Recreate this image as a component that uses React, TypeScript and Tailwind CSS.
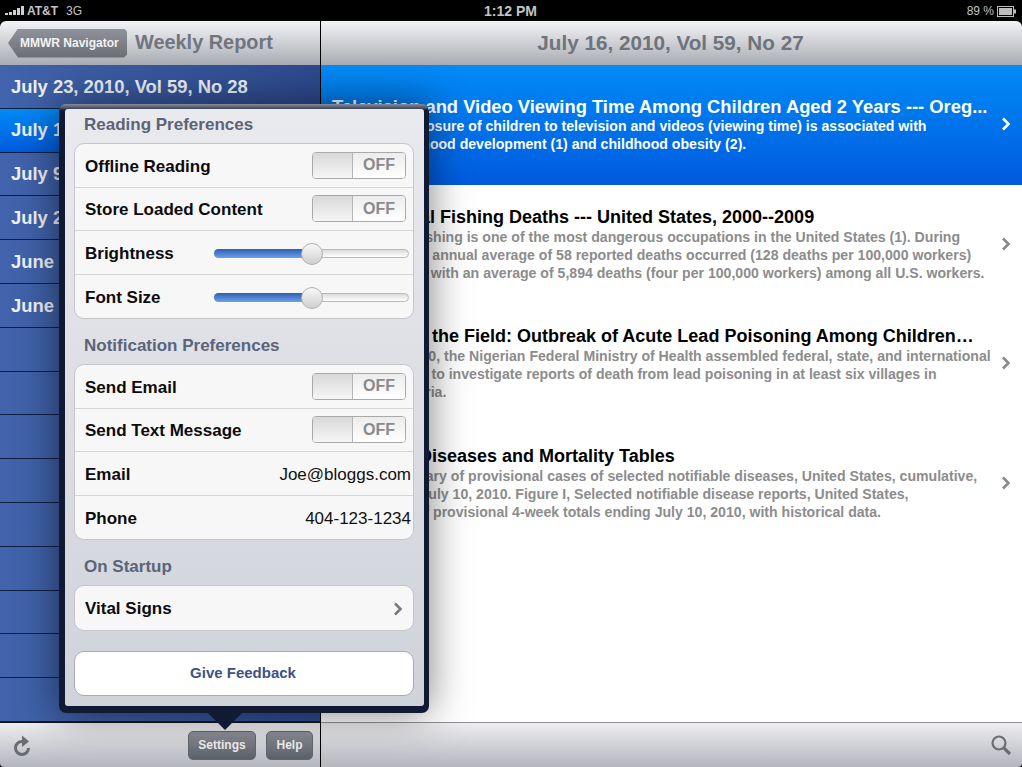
import React from "react";

const F = '"Liberation Sans", Arial, sans-serif';

function Toggle() {
  return (
    <div className="flex h-[27px] w-[94px] mr-[5px] -mt-[2px] rounded-[4px] border border-[#a9a9a9] bg-white overflow-hidden">
      <div className="w-[40px] h-full border-r border-[#b5b5b5] bg-gradient-to-b from-[#d8d8d8] to-[#f6f6f6]" />
      <div className="flex-1 flex items-center justify-center text-[16px] font-bold text-[#8a8a8a] bg-gradient-to-b from-[#ececec] to-white">OFF</div>
    </div>
  );
}

function Slider() {
  return (
    <div className="relative w-[195px] h-[9px] mr-[2px] rounded-full border border-[#b8b8b8] bg-gradient-to-b from-[#dcdcdc] to-white">
      <div className="w-[98px] -mt-px -ml-px h-[9px] rounded-l-full bg-gradient-to-b from-[#2b5fb4] to-[#6fa0e8]" />
      <div className="absolute left-[86px] top-[-7px] w-[22px] h-[22px] rounded-full border border-[#b0b0b0] bg-gradient-to-b from-[#f8f8f8] to-[#cfcfcf]" />
    </div>
  );
}

function Row({ label, children, last }: { label: string; children?: React.ReactNode; last?: boolean }) {
  return (
    <div className={`h-[43.5px] pt-[2px] flex items-center justify-between pl-[10px] pr-[2px] ${last ? "" : "border-b border-[#d6d6d6]"}`}>
      <span className="text-[17px] font-bold text-[#0c0c0c]">{label}</span>
      {children}
    </div>
  );
}

function Group({ children }: { children: React.ReactNode }) {
  return <div className="rounded-[10px] border border-[#c4c6ca] bg-[#f7f7f7] overflow-hidden">{children}</div>;
}

function Header({ children }: { children: React.ReactNode }) {
  return <div className="h-[34px] pl-[10px] pb-[2px] flex items-center text-[17px] font-bold text-[#5b6478]">{children}</div>;
}

function Chevron({ color, className }: { color: string; className?: string }) {
  return (
    <svg width="10" height="14" viewBox="0 0 10 14" className={className}>
      <path d="M2 1.5 L7.5 7 L2 12.5" fill="none" stroke={color} strokeWidth="2.6" />
    </svg>
  );
}

function Article({ title, lines, selected }: { title: string; lines: string[]; selected?: boolean }) {
  return (
    <div className={`relative h-[119.6px] pl-[11px] pr-[30px] flex items-center ${selected ? "bg-gradient-to-b from-[#058bf6] to-[#005ade]" : "bg-white"}`}>
      <div className="w-full whitespace-nowrap overflow-hidden">
        <div className={`leading-[21px] font-bold ${selected ? "text-[18.35px] text-white" : "text-[18px] text-black"}`}>{title}</div>
        {lines.map((l) => (
          <div key={l} className={`text-[14.1px] leading-[18px] font-bold ${selected ? "text-white" : "text-[#8c8c8c]"}`}>{l}</div>
        ))}
      </div>
      <Chevron color={selected ? "#ffffff" : "#8a8a8a"} className="absolute right-[11px] top-[52px]" />
    </div>
  );
}

function Btn({ children, w }: { children: React.ReactNode; w: string }) {
  return (
    <div className={`${w} h-[29px] rounded-[5px] border border-[#63666c] bg-gradient-to-b from-[#8c8f96] to-[#5c6068] text-[#eeeeee] text-[12px] font-bold flex items-center justify-center`}>
      {children}
    </div>
  );
}

const dates = [
  "July 23, 2010, Vol 59, No 28",
  "July 16, 2010, Vol 59, No 27",
  "July 9, 2010, Vol 59, No 26",
  "July 2, 2010, Vol 59, No 25",
  "June 25, 2010, Vol 59, No 24",
  "June 18, 2010, Vol 59, No 23",
];

export default function App() {
  return (
    <div className="relative w-[1022px] h-[767px] overflow-hidden bg-black flex flex-col" style={{ fontFamily: F }}>
      <div className="h-[21px] shrink-0 relative flex items-center justify-between px-[5px] pt-[1px] text-[12px] font-bold text-[#c4c4c4]">
        <div className="flex items-center gap-[2px]">
          <svg width="20" height="10" viewBox="0 0 20 10">
            <rect x="0" y="7" width="3" height="2" fill="#d0d0d0" />
            <rect x="4" y="6" width="3" height="3" fill="#d0d0d0" />
            <rect x="8" y="4" width="3" height="5" fill="#d0d0d0" />
            <rect x="12" y="2" width="3" height="7" fill="#d0d0d0" />
            <rect x="16" y="0" width="3" height="9" fill="#d0d0d0" />
          </svg>
          <span>AT&amp;T</span>
          <span className="ml-[6px] font-normal">3G</span>
        </div>
        <span className="absolute left-[484px] text-[14px] font-bold">1:12 PM</span>
        <div className="flex items-center gap-[3px]">
          <span className="font-normal">89 %</span>
          <svg width="20" height="11" viewBox="0 0 20 11">
            <rect x="0.5" y="0.5" width="16" height="10" fill="none" stroke="#bdbdbd" />
            <rect x="2" y="2" width="13" height="7" fill="#bdbdbd" />
            <rect x="17" y="3.5" width="2" height="4" fill="#bdbdbd" />
          </svg>
        </div>
      </div>

      <div className="flex-1 flex min-h-0">
        <div className="w-[320px] shrink-0 flex flex-col">
          <div className="h-[44px] shrink-0 rounded-tl-[6px] bg-gradient-to-b from-[#f3f4f6] to-[#a9acb3] flex items-center pl-[8px] gap-[8px]">
            <div className="h-[29px] w-[119px] bg-gradient-to-b from-[#8f929a] to-[#6b6e76] text-[#f2f2f2] text-[12px] font-bold flex items-center pl-[12px] [clip-path:polygon(10px_0,calc(100%-3px)_0,100%_3px,100%_calc(100%-3px),calc(100%-3px)_100%,10px_100%,0_50%)]">
              MMWR Navigator
            </div>
            <span className="text-[19.9px] font-bold text-[#71757e]">Weekly Report</span>
          </div>
          <div className="flex-1 min-h-0 overflow-hidden flex flex-col bg-gradient-to-r from-[#4264ac] to-[#2c4a8e]">
            {dates.map((d, i) => (
              <div
                key={d}
                className={`h-[43.8px] shrink-0 pl-[11px] flex items-center border-b border-[#0f1f44] text-[18.4px] font-bold text-[#eef1f7] ${i === 1 ? "bg-gradient-to-b from-[#058bf6] to-[#005ade]" : ""}`}
              >
                {d}
              </div>
            ))}
            {Array.from({ length: 9 }).map((_, i) => (
              <div key={i} className="h-[43.8px] shrink-0 border-b border-[#0f1f44]" />
            ))}
          </div>
          <div className="h-[45px] shrink-0 rounded-bl-[4px] bg-gradient-to-b from-[#eeeef0] to-[#b4b6bd] border-t border-[#10131c] flex items-center pl-[13px]">
            <svg width="20" height="21" viewBox="0 0 20 21">
              <path d="M15.5 13 A6.5 6.5 0 1 1 9 6.5" fill="none" stroke="#696c72" strokeWidth="3" />
              <path d="M9 0.5 L16 6.5 L9 12 Z" fill="#696c72" />
            </svg>
            <div className="ml-[155px]"><Btn w="w-[68px]">Settings</Btn></div>
            <div className="ml-[10px]"><Btn w="w-[47px]">Help</Btn></div>
          </div>
        </div>
        <div className="w-px bg-black shrink-0" />
        <div className="flex-1 flex flex-col min-w-0">
          <div className="h-[44px] shrink-0 rounded-tr-[6px] bg-gradient-to-b from-[#f3f4f6] to-[#a9acb3] flex items-center justify-center pr-[2px] text-[20.7px] font-bold text-[#6f737b]">
            July 16, 2010, Vol 59, No 27
          </div>
          <div className="flex-1 bg-white min-h-0">
            <Article
              selected
              title="Television and Video Viewing Time Among Children Aged 2 Years --- Oreg..."
              lines={[
                "Increased exposure of children to television and videos (viewing time) is associated with",
                "delayed childhood development (1) and childhood obesity (2).",
              ]}
            />
            <Article
              title="Commercial Fishing Deaths --- United States, 2000--2009"
              lines={[
                "Commercial fishing is one of the most dangerous occupations in the United States (1). During",
                "2000--2009, an annual average of 58 reported deaths occurred (128 deaths per 100,000 workers)",
                "US, compared with an average of 5,894 deaths (four per 100,000 workers) among all U.S. workers.",
              ]}
            />
            <Article
              title="Notes from the Field: Outbreak of Acute Lead Poisoning Among Children…"
              lines={[
                "Since May 2010, the Nigerian Federal Ministry of Health assembled federal, state, and international",
                "other partners to investigate reports of death from lead poisoning in at least six villages in",
                "Zamfara, Nigeria.",
              ]}
            />
            <Article
              title="Notifiable Diseases and Mortality Tables"
              lines={[
                "Weekly summary of provisional cases of selected notifiable diseases, United States, cumulative,",
                "week ending July 10, 2010. Figure I, Selected notifiable disease reports, United States,",
                "comparison of provisional 4-week totals ending July 10, 2010, with historical data.",
              ]}
            />
          </div>
          <div className="h-[45px] shrink-0 rounded-br-[4px] bg-gradient-to-b from-[#eeeef0] to-[#b4b6bd] border-t border-[#8f9096] flex items-center justify-end pr-[10px]">
            <svg width="22" height="22" viewBox="0 0 22 22">
              <circle cx="9" cy="9" r="6.5" fill="none" stroke="#6a6d73" strokeWidth="2.2" />
              <path d="M13.8 13.8 L20 20" stroke="#6a6d73" strokeWidth="3.2" />
            </svg>
          </div>
        </div>
      </div>

      <div className="absolute left-[59px] top-[104px] w-[370px] h-[609px] rounded-[7px] bg-[linear-gradient(#8a8d98_0,#3a4258_5px,#101a33_6px)] pl-[6px] pr-[5px] pt-[5px] pb-[7px] shadow-[0_0_40px_rgba(0,0,0,0.5)]">
        <div className="h-full rounded-[3px] bg-gradient-to-b from-[#e9eaee] to-[#cfd2d9] pl-[9px] pr-[10px]">
          <Header>Reading Preferences</Header>
          <Group>
            <Row label="Offline Reading"><Toggle /></Row>
            <Row label="Store Loaded Content"><Toggle /></Row>
            <Row label="Brightness"><Slider /></Row>
            <Row label="Font Size" last><Slider /></Row>
          </Group>
          <div className="mt-[11px]"><Header>Notification Preferences</Header></div>
          <Group>
            <Row label="Send Email"><Toggle /></Row>
            <Row label="Send Text Message"><Toggle /></Row>
            <Row label="Email"><span className="text-[17px] text-[#111]">Joe@bloggs.com</span></Row>
            <Row label="Phone" last><span className="text-[17px] text-[#111]">404-123-1234</span></Row>
          </Group>
          <div className="mt-[11px]"><Header>On Startup</Header></div>
          <Group>
            <Row label="Vital Signs" last><Chevron color="#777b82" className="mr-[8px]" /></Row>
          </Group>
          <div className="mt-[20px] h-[45px] rounded-[10px] border border-[#a9abb0] bg-white flex items-center justify-center pr-[2px] text-[15px] font-bold text-[#3d5283]">
            Give Feedback
          </div>
        </div>
        <div className="absolute left-[148px] top-[608px] w-0 h-0 border-l-[18px] border-r-[18px] border-t-[18px] border-l-transparent border-r-transparent border-t-[#101a33]" />
      </div>
    </div>
  );
}
